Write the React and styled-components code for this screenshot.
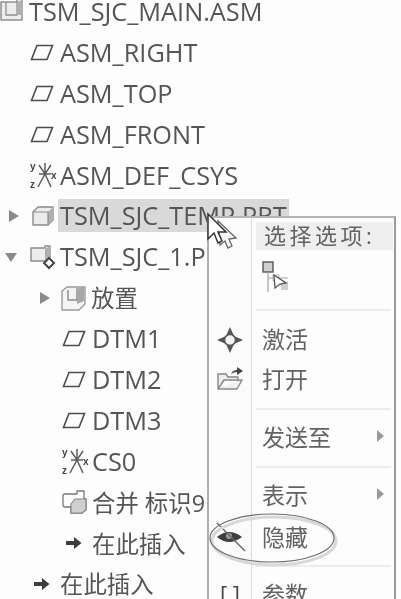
import React from 'react';
import styled, { createGlobalStyle } from 'styled-components';

const GlobalStyle = createGlobalStyle`
    html, body {
        margin: 0;
        height: 100%;
        overflow: hidden;
        background: #fdfdfd;
    }
`;

const Page = styled.div`
    position: relative;
    width: 401px;
    height: 599px;
    overflow: hidden;
    background: #fdfdfd;
    color: #555;
    font-family: "Open Sans", "Noto Sans CJK SC", sans-serif;
    filter: blur(0.45px);
`;

const Tree = styled.div`
    display: flex;
    flex-direction: column;
    margin-top: -9px;
`;

const Row = styled.div`
    display: flex;
    align-items: center;
    height: 40.9px;
    padding-left: ${p => p.$indent}px;
    white-space: nowrap;
`;

const Toggle = styled.span`
    flex: none;
    width: ${p => p.$width || 0}px;
    display: flex;
    align-items: center;
`;

const IconSlot = styled.span`
    flex: none;
    display: flex;
    align-items: center;
    width: ${p => p.$width}px;
`;

const Label = styled.span`
    font-size: ${p => (p.$cjk ? 23.4 : 25.3)}px;
    line-height: 33px;
    padding-top: ${p => (p.$cjk ? 2 : 0)}px;
    padding-right: 2px;
    background: ${p => (p.$selected ? '#d9d9d9' : 'transparent')};
    margin-left: ${p => (p.$selected ? -2 : 0)}px;
    padding-left: ${p => (p.$selected ? 2 : 0)}px;
`;

const Menu = styled.div`
    position: absolute;
    left: 207px;
    top: 216px;
    width: 189px;
    height: 420px;
    display: flex;
    background: #fdfdfd;
    border-top: 2px solid #b5b5b5;
    border-left: 2px solid #b0b0b0;
    border-right: 2px solid #9a9a9a;
    box-sizing: border-box;
`;

const Gutter = styled.div`
    flex: none;
    width: 42px;
    display: flex;
    flex-direction: column;
    align-items: center;
    border-right: 1px solid #dcdcdc;
    background: #fbfbfb;
`;

const GutterCell = styled.div`
    height: ${p => p.$height}px;
    flex: none;
    display: flex;
    align-items: center;
    justify-content: center;
    font-size: 22px;
    color: #444;
`;

const MenuBody = styled.div`
    flex: 1;
    display: flex;
    flex-direction: column;
    padding: 4px 1px 0 4px;
    font-size: 23px;
    color: #626262;
`;

const MenuHeader = styled.div`
    flex: none;
    height: 28px;
    line-height: 26px;
    padding-left: 8px;
    background: #eeeeee;
    letter-spacing: 3.5px;
    font-size: 22px;
    white-space: nowrap;
`;

const MenuItem = styled.div`
    flex: none;
    box-sizing: border-box;
    height: ${p => p.$height}px;
    margin-top: ${p => p.$top || 0}px;
    display: flex;
    align-items: center;
    justify-content: space-between;
    padding: 0 9px 4px 6px;
`;

const Divider = styled.div`
    flex: none;
    height: 2px;
    margin-top: ${p => p.$top || 0}px;
    background: #ececec;
    margin-right: 2px;
`;

const Highlight = styled.svg`
    position: absolute;
    left: 208px;
    top: 508px;
    overflow: visible;
`;

const Pointer = styled.svg`
    position: absolute;
    left: 204px;
    top: 212px;
`;

const Arrow = ({ open }) => (
    <svg width="12" height="12" viewBox="0 0 12 12">
        <path d={open ? 'M0 2 H12 L6 11 Z' : 'M1 0 L11 6 L1 12 Z'} fill="#8a8a8a" />
    </svg>
);

const Plane = () => (
    <svg width="24" height="17" viewBox="0 0 24 17">
        <path d="M7 1.5 H22.5 L17 15.5 H1.5 Z" fill="none" stroke="#4d4d4d" strokeWidth="1.6" />
    </svg>
);

const Csys = () => (
    <svg width="27" height="32" viewBox="0 0 27 32">
        <path d="M9 15 L21 15 M15 4 L15 15 M15 15 L8 28 M15 15 L21 28 M9 6 L15 15 L21 6" stroke="#5c5c5c" strokeWidth="1.5" fill="none" />
        <text x="0" y="11" fontSize="10" fontWeight="700" fill="#444" fontFamily="Liberation Sans">y</text>
        <text x="0" y="29" fontSize="10" fontWeight="700" fill="#444" fontFamily="Liberation Sans">z</text>
        <text x="21" y="20" fontSize="10" fontWeight="700" fill="#444" fontFamily="Liberation Sans">x</text>
    </svg>
);

const Part = () => (
    <svg width="22" height="20" viewBox="0 0 22 20">
        <path d="M1 6 L6 1 H21 V14 L16 19 H1 Z" fill="#ececec" stroke="#8a8a8a" strokeWidth="1.4" strokeLinejoin="round" />
        <path d="M16 6 L21 1 V14 L16 19 Z" fill="#b0b0b0" />
        <path d="M1 6 H16 V19" fill="none" stroke="#8a8a8a" strokeWidth="1.2" />
    </svg>
);

const Assembly = ({ active }) => (
    <svg width="26" height="26" viewBox="0 0 26 26">
        <path d="M1 4 H15 V2 H20 V17 H1 Z" fill="#ededed" stroke="#8a8a8a" strokeWidth="1.4" strokeLinejoin="round" />
        <path d="M15 5 L20 2 V17 L15 17 Z" fill="#aeaeae" />
        {active && <path d="M19 14 L24 19 L19 24 L14 19 Z" fill="#fff" stroke="#444" strokeWidth="2" />}
    </svg>
);

const RootIcon = () => (
    <svg width="24" height="22" viewBox="0 0 24 22">
        <path d="M1 2 H17 V-2 H22 V20 H1 Z" fill="#ededed" stroke="#909090" strokeWidth="1.5" strokeLinejoin="round" />
        <path d="M6 2 V15 H17 V2" fill="none" stroke="#909090" strokeWidth="1.3" />
        <path d="M17 2 L22 0 V15 L17 15 Z" fill="#b0b0b0" />
    </svg>
);

const Placement = () => (
    <svg width="25" height="26" viewBox="0 0 25 26">
        <path d="M1 6 L6 2 H24 V19 L18 25 H1 Z" fill="#f4f4f4" stroke="#9a9a9a" strokeWidth="1.4" strokeLinejoin="round" />
        <path d="M7 5 V15 H16 V3" fill="none" stroke="#8a8a8a" strokeWidth="1.4" />
        <path d="M16 4 L23 1 V16 L16 19 Z" fill="#a8a8a8" />
    </svg>
);

const Merge = () => (
    <svg width="26" height="24" viewBox="0 0 26 24">
        <path d="M3 4 H15 V1 H22 V9 H24 V20 L20 23 H9 V17 H3 Q1 17 1 15 V6 Q1 4 3 4 Z" fill="#fff" stroke="#777" strokeWidth="1.3" strokeLinejoin="round" />
        <path d="M9 14 L13 9 H24 V20 L20 23 H9 Z" fill="#cfcfcf" stroke="#8a8a8a" strokeWidth="1.2" />
    </svg>
);

const InsertArrow = () => (
    <svg width="16" height="14" viewBox="0 0 16 14">
        <path d="M0 5 H8 V1 L15.5 7 L8 13 V9 H0 Z" fill="#3c3c3c" />
    </svg>
);

const Activate = () => (
    <svg width="28" height="28" viewBox="0 0 28 28">
        <path d="M14 1 L18 10 L27 14 L18 18 L14 27 L10 18 L1 14 L10 10 Z" fill="#555" />
        <circle cx="14" cy="14" r="5.5" fill="#f2f2f2" stroke="#555" strokeWidth="1.5" />
    </svg>
);

const OpenFolder = () => (
    <svg width="26" height="24" viewBox="0 0 26 24">
        <path d="M1 22 V7 H9 L11 10 H21 V14 M1 22 H20 L25 13 H7 Z" fill="#efefef" stroke="#888" strokeWidth="1.4" strokeLinejoin="round" />
        <path d="M14 7 Q16 3 20 3 V0 L26 4 L20 8 V5 Q17 5 14 7 Z" fill="#444" />
    </svg>
);

const HideEye = () => (
    <svg width="32" height="30" viewBox="0 0 32 30">
        <path d="M3 15 Q15 5 28 15 Q15 25 3 15 Z" fill="#3f3f3f" />
        <circle cx="15" cy="14" r="3" fill="#999" />
        <path d="M3 1 L31 29" stroke="#666" strokeWidth="1.4" />
    </svg>
);

const Chooser = () => (
    <svg width="28" height="34" viewBox="0 0 28 34">
        <rect x="1" y="1" width="10" height="10" fill="#cfcfcf" stroke="#555" strokeWidth="1.4" />
        <path d="M6 11 V31 M6 17 H26" stroke="#a5a5a5" strokeWidth="1.2" />
        <rect x="11" y="14" width="6" height="6" fill="none" stroke="#bbb" />
        <rect x="19" y="21" width="7" height="8" fill="#cfcfcf" />
        <path d="M12 14 L24 22 L18 23 L13 27 Z" fill="#fff" stroke="#555" strokeWidth="1.3" />
    </svg>
);

const Submenu = () => (
    <svg width="7" height="12" viewBox="0 0 7 12">
        <path d="M0 0 L7 6 L0 12 Z" fill="#9a9a9a" />
    </svg>
);

const rows = [
    { indent: 0, icon: <RootIcon />, iconWidth: 29, text: 'TSM_SJC_MAIN.ASM' },
    { indent: 30, icon: <Plane />, iconWidth: 30, text: 'ASM_RIGHT' },
    { indent: 30, icon: <Plane />, iconWidth: 30, text: 'ASM_TOP' },
    { indent: 30, icon: <Plane />, iconWidth: 30, text: 'ASM_FRONT' },
    { indent: 30, icon: <Csys />, iconWidth: 30, text: 'ASM_DEF_CSYS' },
    { indent: 8, toggle: <Arrow />, toggleWidth: 24, icon: <Part />, iconWidth: 28, text: 'TSM_SJC_TEMP.PRT', selected: true },
    { indent: 5, toggle: <Arrow open />, toggleWidth: 25, icon: <Assembly active />, iconWidth: 30, text: 'TSM_SJC_1.PRT' },
    { indent: 39, toggle: <Arrow />, toggleWidth: 22, icon: <Placement />, iconWidth: 30, text: '放置', cjk: true },
    { indent: 62, icon: <Plane />, iconWidth: 30, text: 'DTM1' },
    { indent: 62, icon: <Plane />, iconWidth: 30, text: 'DTM2' },
    { indent: 62, icon: <Plane />, iconWidth: 30, text: 'DTM3' },
    { indent: 62, icon: <Csys />, iconWidth: 30, text: 'CS0' },
    { indent: 62, icon: <Merge />, iconWidth: 30, text: '合并 标识9', cjk: true },
    { indent: 66, icon: <InsertArrow />, iconWidth: 26, text: '在此插入', cjk: true },
    { indent: 34, icon: <InsertArrow />, iconWidth: 26, text: '在此插入', cjk: true },
];

export default function App() {
    return (
        <>
            <GlobalStyle />
            <Page>
                <Tree>
                    {rows.map((row, i) => (
                        <Row key={i} $indent={row.indent}>
                            {row.toggle && <Toggle $width={row.toggleWidth}>{row.toggle}</Toggle>}
                            <IconSlot $width={row.iconWidth}>{row.icon}</IconSlot>
                            <Label $selected={row.selected} $cjk={row.cjk}>{row.text}</Label>
                        </Row>
                    ))}
                </Tree>

                <Menu>
                    <Gutter>
                        <GutterCell $height={102} />
                        <GutterCell $height={40}><Activate /></GutterCell>
                        <GutterCell $height={38}><OpenFolder /></GutterCell>
                        <GutterCell $height={117} />
                        <GutterCell $height={44}><HideEye /></GutterCell>
                        <GutterCell $height={68}>[ ]</GutterCell>
                    </Gutter>
                    <MenuBody>
                        <MenuHeader>选择选项:</MenuHeader>
                        <MenuItem $height={59}><Chooser /></MenuItem>
                        <Divider />
                        <MenuItem $top={9} $height={40}>激活</MenuItem>
                        <MenuItem $height={40}>打开</MenuItem>
                        <Divider $top={8} />
                        <MenuItem $height={56}>发送至<Submenu /></MenuItem>
                        <Divider />
                        <MenuItem $top={8} $height={40}>表示<Submenu /></MenuItem>
                        <MenuItem $top={2} $height={40}>隐藏</MenuItem>
                        <Divider $top={7} />
                        <MenuItem $height={56}>参数</MenuItem>
                    </MenuBody>
                </Menu>

                <Highlight width="130" height="56" viewBox="0 0 130 56">
                    <ellipse cx="66" cy="33" rx="62" ry="24" fill="none" stroke="#d8d8d8" strokeWidth="3" />
                    <ellipse cx="64" cy="30" rx="62" ry="24" fill="none" stroke="#6e6e6e" strokeWidth="1.2" />
                </Highlight>

                <Pointer width="34" height="38" viewBox="0 0 34 38">
                    <path d="M14 9 L32 26 L25 27 L28 34 L24 36 L21 29 L16 33 Z" fill="#f6f6f6" stroke="#666" strokeWidth="1.3" />
                    <path d="M4 2 L4 27 L10 21 L14 31 L18 29 L14 20 L22 20 Z" fill="#fff" stroke="#333" strokeWidth="1.5" />
                </Pointer>
            </Page>
        </>
    );
}
